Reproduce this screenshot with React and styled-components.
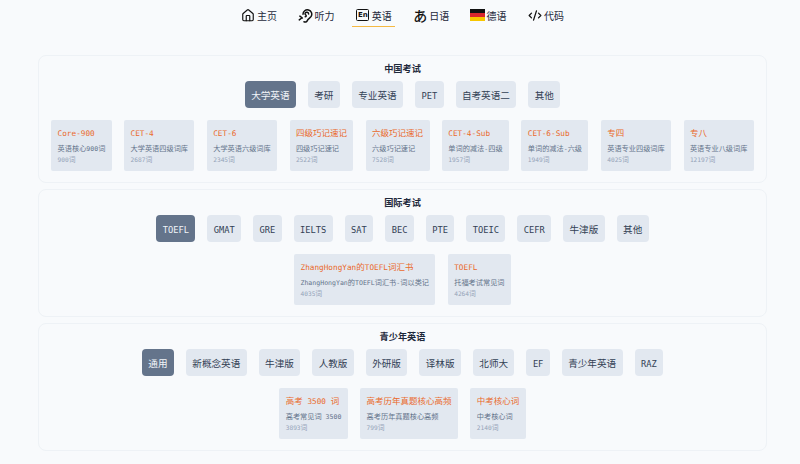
import React from "react";
import styled, { createGlobalStyle } from "styled-components";
import { House, CodeXml } from "lucide-react";

const Global = createGlobalStyle`
  html, body { margin: 0; padding: 0; background: #f8fafc; }
  body { font-family: "Noto Sans CJK SC", sans-serif; color: #1e293b; }
`;
const Page = styled.div`width: 800px; height: 464px; overflow: hidden; background: #f8fafc;`;
const Nav = styled.nav`
  display: flex; justify-content: center; gap: 14.4px; height: 55px; box-sizing: border-box;
  padding: 4px 0 0 5px;
`;
const NavItem = styled.div`
  width: 43px; height: 23px; box-sizing: border-box; display: flex; align-items: center; justify-content: center; gap: 2px;
  font-size: 10px; color: #1e293b;
  border-bottom: 1px solid ${p => (p.$active ? "#f5b942" : "transparent")};
`;
const NavIcon = styled.span`width: 14px; height: 16px; display: flex; align-items: center; justify-content: center; flex: none;`;
const EnBox = styled.span`
  width: 13px; height: 12px; flex: none; border: 1.4px solid #111; border-radius: 1.5px; box-sizing: border-box;
  font: bold 7px "DejaVu Sans", sans-serif; display: flex; align-items: center; justify-content: center; color: #111;
`;
const Kana = styled.span`font: 500 14px/15px "Noto Sans CJK JP", sans-serif; color: #111;`;
const Sections = styled.div`display: flex; flex-direction: column; gap: 6px; margin: 0 33px 0 38px;`;
const Section = styled.section`
  border: 1px solid #eef2f6; border-radius: 8px; box-sizing: border-box; height: 128px;
  padding-top: 6px; display: flex; flex-direction: column; align-items: center;
`;
const Title = styled.h2`margin: 0 0 6px; font: 600 9.2px/13px "Noto Sans CJK SC", sans-serif; color: #1e293b;`;
const Tabs = styled.div`display: flex; justify-content: center; gap: 12px; margin-bottom: 12px;`;
const Tab = styled.button`
  height: 27px; padding: 0 6.4px; border: 0; border-radius: 4px; font-size: 9.6px;
  font-family: "Noto Sans CJK SC", sans-serif;
  background: ${p => (p.$active ? "#64748b" : "#e2e8f0")};
  color: ${p => (p.$active ? "#f1f5f9" : "#334155")};
`;
const Latin = styled.span`font-family: "DejaVu Sans Mono", monospace; font-size: 0.91em; line-height: 0; font-weight: 400;`;
const Cards = styled.div`display: flex; justify-content: center; gap: 12.4px;`;
const Card = styled.div`background: #e2e8f0; border-radius: 2px; height: 50.5px; box-sizing: border-box; padding: 6px 6.4px 0;`;
const CardTitle = styled.div`font-size: 8.5px; line-height: 12px; color: #ea6a2c; white-space: nowrap;`;
const CardDesc = styled.div`font-size: 7.2px; line-height: 12px; margin-top: 4px; color: #64748b; white-space: nowrap;`;
const CardCount = styled.div`font-size: 6.8px; line-height: 9px; margin-top: 1px; color: #94a3b8; white-space: nowrap;`;

const Mixed = ({ text }) =>
  text.split(/([\x20-\x7e]+)/).filter(Boolean).map((part, i) =>
    /[\x20-\x7e]/.test(part) ? <Latin key={i}>{part}</Latin> : <React.Fragment key={i}>{part}</React.Fragment>
  );

const Flag = () => (
  <svg width="15" height="12" viewBox="0 0 15 12" style={{ flex: "none" }}>
    <rect width="15" height="4" y="0" fill="#111" />
    <rect width="15" height="4" y="4" fill="#d8262c" />
    <rect width="15" height="4" y="8" fill="#f7c600" />
  </svg>
);
const EarIcon = () => (
  <svg width="15" height="15" viewBox="0 0 24 24" fill="none" stroke="#111" strokeWidth="2.4" strokeLinecap="round" strokeLinejoin="round" style={{ flex: "none" }}>
    <path d="M8 10a7 7 0 1 1 13 3.5c-2 3-5 3.5-6 6.5-.8 2.4-3.5 3-5.5 2" />
    <path d="M17 9.5a3 3 0 0 0-5.6-1.3c-.8 1.6.3 2.5 1.3 3.3.9.8.4 2.5-1.2 2.5" />
    <path d="M3 13l4 3M2 19l4-3" />
  </svg>
);

const nav = [
  { t: "主页", i: <House size={17} strokeWidth={2} color="#111" /> },
  { t: "听力", i: <EarIcon /> },
  { t: "英语", i: <EnBox>En</EnBox>, active: true },
  { t: "日语", i: <Kana>あ</Kana> },
  { t: "德语", i: <Flag /> },
  { t: "代码", i: <CodeXml size={15} strokeWidth={2.2} color="#111" /> },
];
const data = [
  { title: "中国考试", tabs: ["大学英语", "考研", "专业英语", "PET", "自考英语二", "其他"], cards: [
    ["Core-900", "英语核心900词", "900词"], ["CET-4", "大学英语四级词库", "2687词"], ["CET-6", "大学英语六级词库", "2345词"],
    ["四级巧记速记", "四级巧记速记", "2522词"], ["六级巧记速记", "六级巧记速记", "7528词"], ["CET-4-Sub", "单词的减法-四级", "1957词"],
    ["CET-6-Sub", "单词的减法-六级", "1949词"], ["专四", "英语专业四级词库", "4025词"], ["专八", "英语专业八级词库", "12197词"] ] },
  { title: "国际考试", tabs: ["TOEFL", "GMAT", "GRE", "IELTS", "SAT", "BEC", "PTE", "TOEIC", "CEFR", "牛津版", "其他"], cards: [
    ["ZhangHongYan的TOEFL词汇书", "ZhangHongYan的TOEFL词汇书-词以类记", "4035词"], ["TOEFL", "托福考试常见词", "4264词"] ] },
  { title: "青少年英语", tabs: ["通用", "新概念英语", "牛津版", "人教版", "外研版", "译林版", "北师大", "EF", "青少年英语", "RAZ"], cards: [
    ["高考 3500 词", "高考常见词 3500", "3893词"], ["高考历年真题核心高频", "高考历年真题核心高频", "799词"], ["中考核心词", "中考核心词", "2140词"] ] },
];

export default function App() {
  return (
    <Page>
      <Global />
      <Nav>{nav.map(n => <NavItem key={n.t} $active={n.active}><NavIcon>{n.i}</NavIcon><span>{n.t}</span></NavItem>)}</Nav>
      <Sections>
        {data.map(s => (
          <Section key={s.title}>
            <Title>{s.title}</Title>
            <Tabs>{s.tabs.map((t, i) => <Tab key={t} $active={i === 0}><Mixed text={t} /></Tab>)}</Tabs>
            <Cards>{s.cards.map(c => (
              <Card key={c[0]}>
                <CardTitle><Mixed text={c[0]} /></CardTitle>
                <CardDesc><Mixed text={c[1]} /></CardDesc>
                <CardCount><Mixed text={c[2]} /></CardCount>
              </Card>
            ))}</Cards>
          </Section>
        ))}
      </Sections>
    </Page>
  );
}
